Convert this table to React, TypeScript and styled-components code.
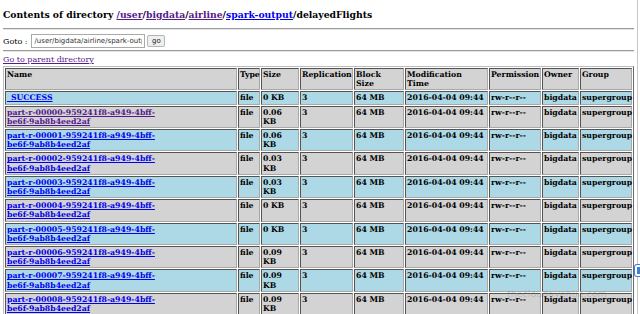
import styled, { createGlobalStyle } from 'styled-components';

const DIR_LINKS = [
  { label: '/user', visited: true },
  { label: 'bigdata', visited: true },
  { label: 'airline', visited: true },
  { label: 'spark-output', visited: false },
];

const HEADERS = [
  { lines: ['Name'], width: 232 },
  { lines: ['Type'], width: 22 },
  { lines: ['Size'], width: 38 },
  { lines: ['Replication'], width: 53 },
  { lines: ['Block', 'Size'], width: 50 },
  { lines: ['Modification', 'Time'], width: 83 },
  { lines: ['Permission'], width: 52 },
  { lines: ['Owner'], width: 37 },
  { lines: ['Group'], width: 52 },
];

const SUFFIX = '959241f8-a949-4bff-';
const TAIL = 'be6f-9ab8b4eed2af';

type Row = { head: string; tail?: string; size: string; visited?: boolean };

const ROWS: Row[] = [
  { head: '_SUCCESS', size: '0 KB' },
  { head: `part-r-00000-${SUFFIX}`, tail: TAIL, size: '0.06 KB', visited: true },
  { head: `part-r-00001-${SUFFIX}`, tail: TAIL, size: '0.06 KB' },
  { head: `part-r-00002-${SUFFIX}`, tail: TAIL, size: '0.03 KB' },
  { head: `part-r-00003-${SUFFIX}`, tail: TAIL, size: '0.03 KB' },
  { head: `part-r-00004-${SUFFIX}`, tail: TAIL, size: '0 KB' },
  { head: `part-r-00005-${SUFFIX}`, tail: TAIL, size: '0 KB' },
  { head: `part-r-00006-${SUFFIX}`, tail: TAIL, size: '0.09 KB' },
  { head: `part-r-00007-${SUFFIX}`, tail: TAIL, size: '0.09 KB' },
  { head: `part-r-00008-${SUFFIX}`, tail: TAIL, size: '0.09 KB' },
];

const GlobalStyle = createGlobalStyle`
  html, body {
    margin: 0;
    background: #fff;
    overflow: hidden;
  }
  body {
    font-family: "DejaVu Serif", serif;
    color: #000;
  }
`;

const App = () => (
  <>
    <GlobalStyle />
    <Shell>
      <Page>
        <Heading>
          Contents of directory{' '}
          {DIR_LINKS.map((d) => (
            <span key={d.label}>
              <DirLink $visited={d.visited}>{d.label}</DirLink>/
            </span>
          ))}
          delayedFlights
        </Heading>
        <Rule />
        <GotoRow>
          <span>Goto :</span>
          <PathInput readOnly value="/user/bigdata/airline/spark-output/delayedFlights" />
          <GoButton>go</GoButton>
        </GotoRow>
        <Rule $tight />
        <ParentLink>Go to parent directory</ParentLink>
        <Listing>
          <colgroup>
            {HEADERS.map((h) => (
              <col key={h.lines[0]} style={{ width: h.width }} />
            ))}
          </colgroup>
          <thead>
            <tr>
              {HEADERS.map((h) => (
                <HeadCell key={h.lines[0]}>
                  {h.lines.map((l, i) => (
                    <span key={l}>
                      {i > 0 && <br />}
                      {l}
                    </span>
                  ))}
                </HeadCell>
              ))}
            </tr>
          </thead>
          <tbody>
            {ROWS.map((r, i) => (
              <BodyRow key={r.head} $blue={i % 2 === 0}>
                <td>
                  <FileLink $visited={r.visited}>
                    {r.head}
                    {r.tail && (
                      <>
                        <br />
                        {r.tail}
                      </>
                    )}
                  </FileLink>
                </td>
                <td>file</td>
                <td>{r.size}</td>
                <td>3</td>
                <td>64 MB</td>
                <td>2016-04-04 09:44</td>
                <td>rw-r--r--</td>
                <td>bigdata</td>
                <td>supergroup</td>
              </BodyRow>
            ))}
          </tbody>
        </Listing>
        <Watermark>thecloudavenue.com</Watermark>
      </Page>
      <Gutter>
        <ShareBadge />
      </Gutter>
    </Shell>
  </>
);

export default App;

const Shell = styled.div`
  display: flex;
  width: 640px;
  height: 314px;
  overflow: hidden;
`;

const Page = styled.div`
  position: relative;
  width: 631px;
  padding: 0 3px;
  flex-shrink: 0;
`;

const Gutter = styled.div`
  position: relative;
  flex: 1;
  border-left: 1px solid #c9c9c9;
`;

const ShareBadge = styled.div`
  position: absolute;
  top: 265px;
  left: -3px;
  width: 10px;
  height: 11px;
  border-radius: 2px;
  background: #3f7fd6;
  box-shadow: inset 0 0 0 2px #fff, 0 0 0 1px #3f7fd6;
`;

const Heading = styled.h3`
  margin: 0;
  padding-top: 9px;
  font-size: 9.25px;
  line-height: 12px;
  font-weight: bold;
`;

const DirLink = styled.a<{ $visited?: boolean }>`
  color: ${(p) => (p.$visited ? '#551a8b' : '#0000ee')};
  text-decoration: underline;
  cursor: pointer;
`;

const Rule = styled.hr<{ $tight?: boolean }>`
  margin: ${(p) => (p.$tight ? '2px 0 0' : '7px 0 0')};
  border: 0;
  border-top: 1px solid #9a9a9a;
  border-bottom: 1px solid #e4e4e4;
`;

const GotoRow = styled.div`
  display: flex;
  align-items: center;
  gap: 4px;
  height: 14px;
  margin-top: 4px;
  font-size: 8px;
`;

const PathInput = styled.input`
  box-sizing: border-box;
  width: 114px;
  height: 14px;
  margin: 0;
  padding: 0 2px;
  border: 1px solid #a9a9a9;
  font-family: "DejaVu Sans", sans-serif;
  font-size: 7px;
  color: #333;
  background: #fff;
`;

const GoButton = styled.button`
  box-sizing: border-box;
  width: 18px;
  height: 12px;
  margin-left: -2px;
  padding: 0;
  border: 1px solid #b5b5b5;
  border-radius: 2px;
  background: #efefef;
  font-family: "DejaVu Sans", sans-serif;
  font-size: 7px;
  line-height: 10px;
  color: #222;
`;

const ParentLink = styled.a`
  display: block;
  margin-top: 3px;
  font-size: 8px;
  line-height: 10px;
  color: #551a8b;
  text-decoration: underline;
  cursor: pointer;
`;

const Listing = styled.table`
  width: 631px;
  margin-top: 1px;
  table-layout: fixed;
  border-collapse: separate;
  border-spacing: 1px;
  border: 1px outset #bdbdbd;
  font-size: 7.75px;
  line-height: 9.2px;
  font-weight: bold;

  td {
    box-sizing: border-box;
    padding: 1px;
    border: 1px inset #a8a8a8;
    vertical-align: top;
    overflow: visible;
  }
`;

const HeadCell = styled.th`
  box-sizing: border-box;
  padding: 1px;
  height: 22px;
  border: 1px inset #a8a8a8;
  background: #d3d3d3;
  text-align: left;
  vertical-align: top;
  font-weight: bold;
`;

const BodyRow = styled.tr<{ $blue: boolean }>`
  background: ${(p) => (p.$blue ? '#add8e6' : '#d3d3d3')};
`;

const FileLink = styled.a<{ $visited?: boolean }>`
  color: ${(p) => (p.$visited ? '#551a8b' : '#0000ee')};
  text-decoration: underline;
  cursor: pointer;
`;

const Watermark = styled.div`
  position: absolute;
  left: 507px;
  top: 288px;
  font-family: "DejaVu Sans", sans-serif;
  font-size: 9.5px;
  color: rgba(120, 120, 120, 0.3);
  pointer-events: none;
`;
